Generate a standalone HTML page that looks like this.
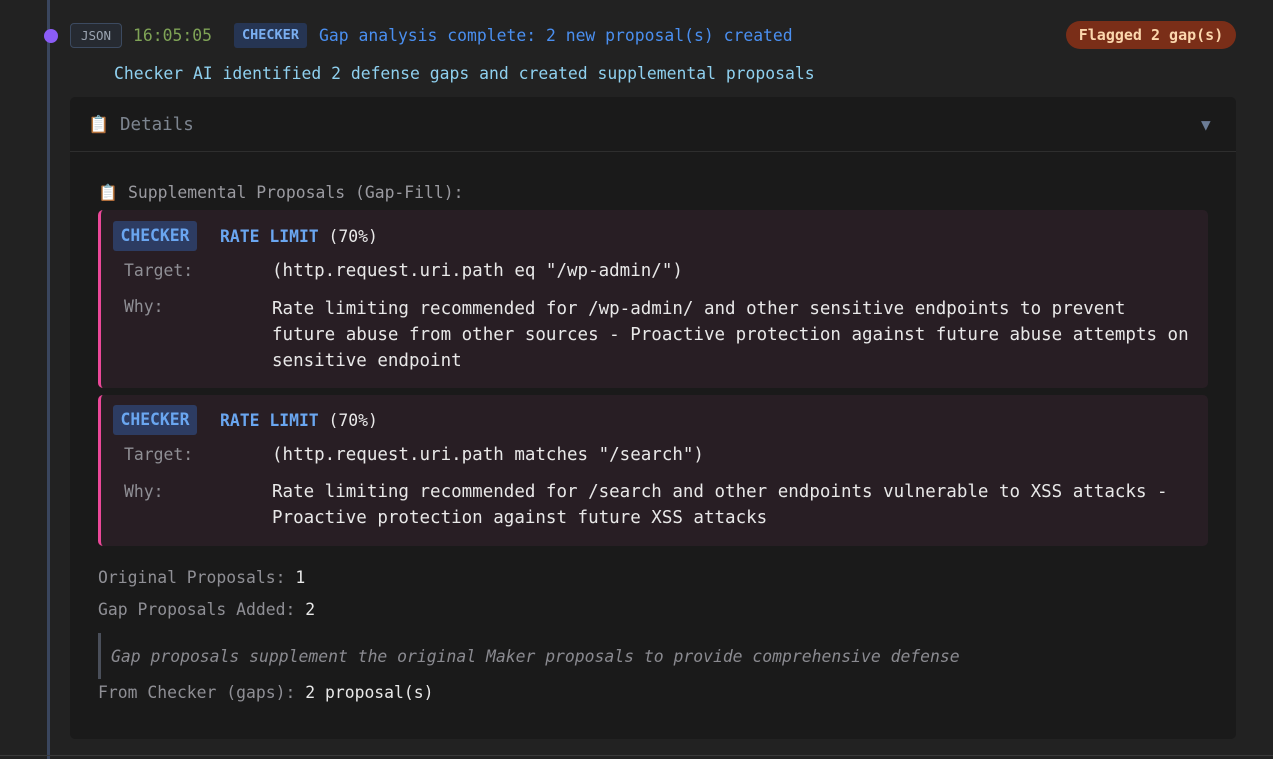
<!DOCTYPE html>
<html><head><meta charset="utf-8"><style>
*{margin:0;padding:0;box-sizing:border-box}
body{width:1273px;height:759px;background:#222222;position:relative;overflow:hidden;font-family:"DejaVu Sans Mono","Liberation Mono",monospace;font-size:16.4px;}
.a{position:absolute;white-space:nowrap;line-height:20px}
.line{position:absolute;left:47px;top:0;width:3px;height:759px;background:#3a465e}
.dot{position:absolute;left:44px;top:29px;width:14px;height:14px;border-radius:50%;background:#8b5cf6}
.json{position:absolute;left:70px;top:23px;width:52px;height:25px;border:1px solid #3c4a60;border-radius:4px;background:#262a31;color:#9aa3b0;font-size:12.5px;text-align:center;line-height:23px}
.chk{position:absolute;left:234px;top:23px;width:73px;height:25px;background:#263553;border-radius:3px;color:#7aaef0;font-weight:bold;font-size:13.5px;text-align:center;line-height:24px}
.flag{position:absolute;left:1066px;top:21px;width:170px;height:28px;border-radius:14px;background:#7a2e18;color:#fbd7ad;font-weight:bold;font-size:15px;text-align:center;line-height:28px}
.panel{position:absolute;left:70px;top:97px;width:1166px;height:642px;background:#1a1a1a;border-radius:5px}
.hdr{position:absolute;left:0;top:0;width:1166px;height:55px;border-bottom:1px solid #2e2e2e}
.card{position:absolute;left:98px;width:1110px;background:#281e24;border-left:3px solid #ec4899;border-radius:5px}
.cb{position:absolute;left:113px;width:84px;height:30px;background:#2d3c62;border-radius:3px;color:#6aa6f0;font-weight:bold;font-size:16.4px;text-align:center;line-height:30px}
.lbl{color:#8f8f95;font-size:16.4px}
.v{color:#e8e8e8;font-size:17.5px}
.fv{color:#e8e8e8;font-size:16.4px}
.rl{color:#6aa6f0;font-weight:bold}
</style></head><body>
<div class="line"></div><div class="dot"></div>
<div class="json">JSON</div>
<div class="a" style="left:133px;top:26px;color:#7fa356">16:05:05</div>
<div class="chk">CHECKER</div>
<div class="a" style="left:319px;top:26px;color:#4a8ff0">Gap analysis complete: 2 new proposal(s) created</div>
<div class="flag">Flagged 2 gap(s)</div>
<div class="a" style="left:114px;top:64px;color:#8fd0ef">Checker AI identified 2 defense gaps and created supplemental proposals</div>
<div class="panel"><div class="hdr"></div></div>
<div class="a" style="left:88px;top:115px;font-size:17px">📋</div>
<div class="a" style="left:120px;top:115px;color:#7d8590;font-size:17.5px">Details</div>
<div class="a" style="left:1201px;top:115px;color:#6b7c96;font-size:16px">▼</div>
<div class="a" style="left:98px;top:183px;font-size:16px">📋</div>
<div class="a" style="left:128px;top:183px;color:#9a9aa0">Supplemental Proposals (Gap-Fill):</div>

<div class="card" style="top:210px;height:178px"></div>
<div class="cb" style="top:221px">CHECKER</div>
<div class="a v" style="left:220px;top:227px;font-size:16.4px"><span class="rl">RATE LIMIT</span> (70%)</div>
<div class="a lbl" style="left:124px;top:261px">Target:</div>
<div class="a v" style="left:272px;top:261px">(http.request.uri.path eq "/wp-admin/")</div>
<div class="a lbl" style="left:124px;top:297px">Why:</div>
<div class="a v" style="left:272px;top:296px;line-height:26px">Rate limiting recommended for /wp-admin/ and other sensitive endpoints to prevent<br>future abuse from other sources - Proactive protection against future abuse attempts on<br>sensitive endpoint</div>

<div class="card" style="top:395px;height:151px"></div>
<div class="cb" style="top:405px">CHECKER</div>
<div class="a v" style="left:220px;top:411px;font-size:16.4px"><span class="rl">RATE LIMIT</span> (70%)</div>
<div class="a lbl" style="left:124px;top:445px">Target:</div>
<div class="a v" style="left:272px;top:445px">(http.request.uri.path matches "/search")</div>
<div class="a lbl" style="left:124px;top:482px">Why:</div>
<div class="a v" style="left:272px;top:479px;line-height:26px">Rate limiting recommended for /search and other endpoints vulnerable to XSS attacks -<br>Proactive protection against future XSS attacks</div>

<div class="a" style="left:98px;top:568px"><span class="lbl">Original Proposals: </span><span class="fv">1</span></div>
<div class="a" style="left:98px;top:600px"><span class="lbl">Gap Proposals Added: </span><span class="fv">2</span></div>
<div style="position:absolute;left:98px;top:633px;width:3px;height:46px;background:#4a4f5a"></div>
<div class="a" style="left:111px;top:647px;color:#8a8a90;font-style:italic">Gap proposals supplement the original Maker proposals to provide comprehensive defense</div>
<div class="a" style="left:98px;top:683px"><span class="lbl">From Checker (gaps): </span><span class="fv">2 proposal(s)</span></div>
<div style="position:absolute;left:0;top:755px;width:1273px;height:1px;background:#3a3a3a"></div>
</body></html>
